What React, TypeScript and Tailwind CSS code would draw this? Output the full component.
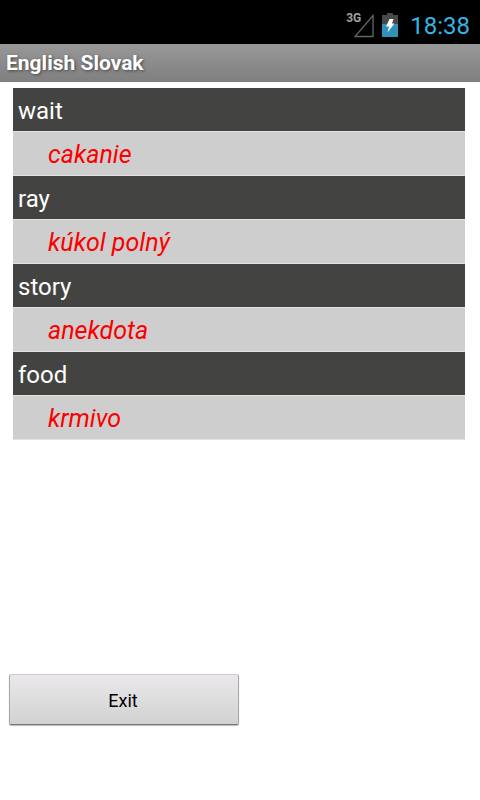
type Entry = {
  word: string;
  translation: string;
};

const entries: Entry[] = [
  { word: "wait", translation: "cakanie" },
  { word: "ray", translation: "kúkol polný" },
  { word: "story", translation: "anekdota" },
  { word: "food", translation: "krmivo" }
];

function SignalIcon() {
  return (
    <svg className="h-7 w-7" viewBox="0 0 28 28" fill="none" aria-hidden="true">
      <path d="M9 25.5H27V4.5Z" stroke="#666666" strokeWidth="1.3" />
    </svg>
  );
}

function BatteryIcon() {
  return (
    <svg className="h-6 w-4" viewBox="0 0 16 24" aria-hidden="true">
      <path d="M5 0H11V2H16V11H0V2H5Z" fill="#484848" />
      <path d="M0 11H16V24H0Z" fill="#2d93b8" />
      <path d="M7.5 6H11.5L10 10.5H12.5L5.5 19.5L7 13.5H4Z" fill="#ffffff" />
    </svg>
  );
}

function StatusBar() {
  return (
    <header className="flex h-11 items-center justify-end bg-black pr-2.5 pt-1.5">
      <div className="relative mr-2">
        <SignalIcon />
        <span className="absolute left-0 top-0 text-[12px] font-bold leading-[14px] text-[#a0a0a0]">3G</span>
      </div>
      <BatteryIcon />
      <time className="ml-3 pt-0.5 text-[24px] leading-8 text-[#33b5e5]">18:38</time>
    </header>
  );
}

export default function App() {
  return (
    <div className="flex min-h-screen flex-col bg-white font-[Roboto,sans-serif]">
      <StatusBar />
      <h1 className="bg-linear-to-b from-[#989898] to-[#7f7f7f] px-1.5 text-[21px] font-bold leading-[38px] text-white [text-shadow:1px_1px_3px_#444444]">
        English Slovak
      </h1>
      <main className="flex flex-1 flex-col justify-between pb-[75px] pt-1.5">
        <dl className="ml-[13px] mr-[15px]">
          {entries.map((entry) => (
            <div key={entry.word}>
              <dt className="bg-[#434441] px-[5px] pt-[3px] text-[24px] leading-10 text-white">{entry.word}</dt>
              <dd className="border-y border-[#e2e2e2] bg-[#cecece] pl-[35px] pt-[3px] text-[25px] italic leading-10 text-[#fa0000]">
                {entry.translation}
              </dd>
            </div>
          ))}
        </dl>
        <div className="w-1/2 pl-[9px] pr-px">
          <button
            type="button"
            className="h-[51px] w-full rounded-xs border border-[#a8a8a8] border-b-[#777777] border-t-[#cccccc] bg-linear-to-b from-[#ebe8eb] to-[#d2d2d2] pr-0.5 pt-0.5 text-[18px] text-black shadow-[0_1px_1px_#bbbbbb]"
          >
            Exit
          </button>
        </div>
      </main>
    </div>
  );
}
